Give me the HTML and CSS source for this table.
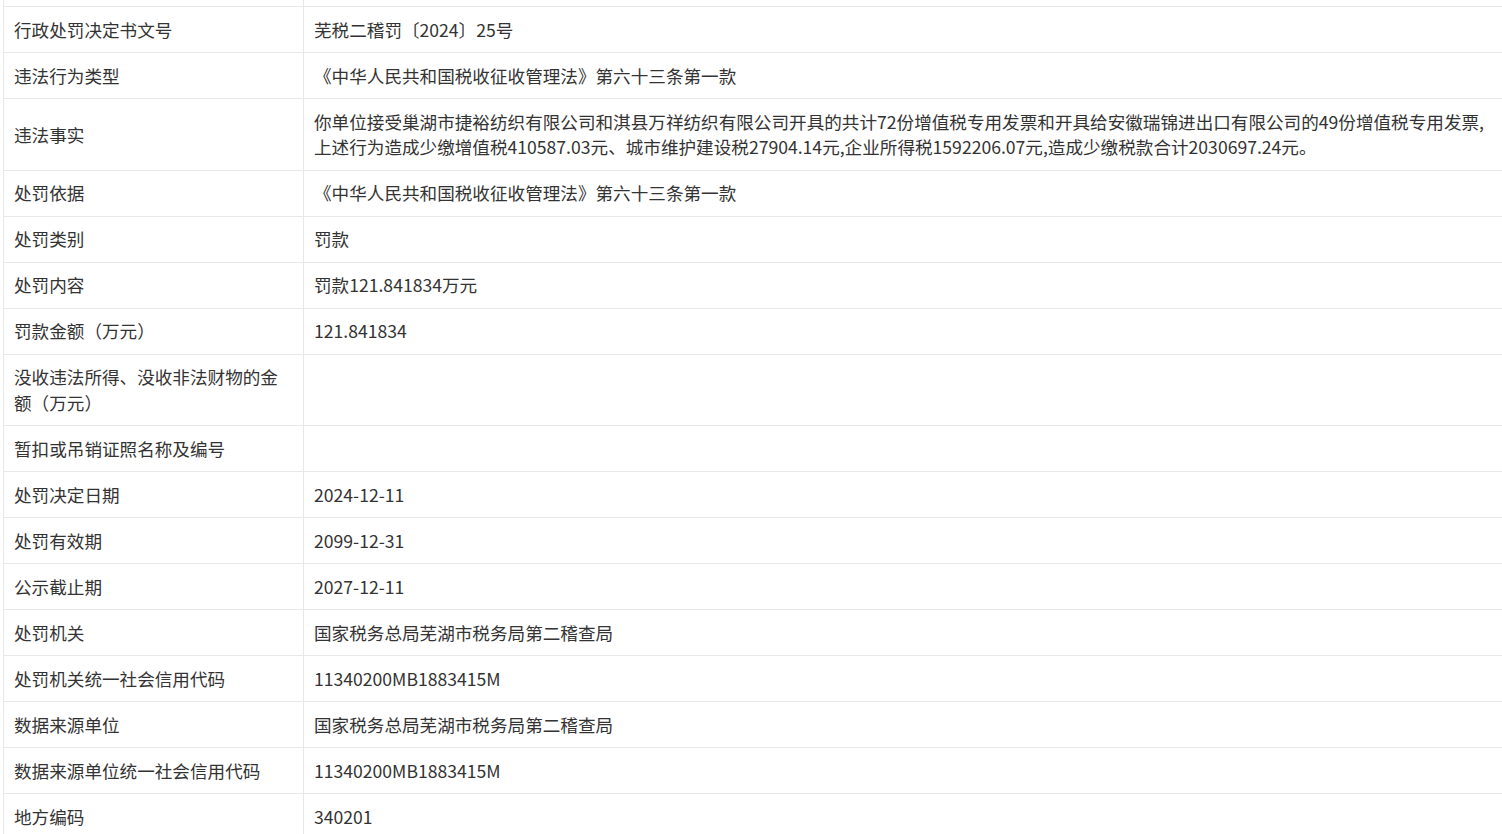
FILE: index.html
```html
<!DOCTYPE html>
<html lang="zh-CN">
<head>
<meta charset="utf-8">
<title>行政处罚信息</title>
<link rel="stylesheet" href="styles.css">
</head>
<body>
<div class="wrap">
<table class="info">
  <colgroup><col class="col-label"><col class="col-value"></colgroup>
  <tbody>
    <tr class="cut"><td>&nbsp;</td><td>&nbsp;</td></tr>
    <tr><td>行政处罚决定书文号</td><td>芜税二稽罚〔2024〕25号</td></tr>
    <tr><td>违法行为类型</td><td>《中华人民共和国税收征收管理法》第六十三条第一款</td></tr>
    <tr><td>违法事实</td><td>你单位接受巢湖市捷裕纺织有限公司和淇县万祥纺织有限公司开具的共计72份增值税专用发票和开具给安徽瑞锦进出口有限公司的49份增值税专用发票,<br>上述行为造成少缴增值税410587.03元、城市维护建设税27904.14元,企业所得税1592206.07元,造成少缴税款合计2030697.24元。</td></tr>
    <tr><td>处罚依据</td><td>《中华人民共和国税收征收管理法》第六十三条第一款</td></tr>
    <tr><td>处罚类别</td><td>罚款</td></tr>
    <tr><td>处罚内容</td><td>罚款121.841834万元</td></tr>
    <tr><td>罚款金额（万元）</td><td>121.841834</td></tr>
    <tr><td>没收违法所得、没收非法财物的金额（万元）</td><td></td></tr>
    <tr><td>暂扣或吊销证照名称及编号</td><td></td></tr>
    <tr><td>处罚决定日期</td><td>2024-12-11</td></tr>
    <tr><td>处罚有效期</td><td>2099-12-31</td></tr>
    <tr><td>公示截止期</td><td>2027-12-11</td></tr>
    <tr><td>处罚机关</td><td>国家税务总局芜湖市税务局第二稽查局</td></tr>
    <tr><td>处罚机关统一社会信用代码</td><td>11340200MB1883415M</td></tr>
    <tr><td>数据来源单位</td><td>国家税务总局芜湖市税务局第二稽查局</td></tr>
    <tr><td>数据来源单位统一社会信用代码</td><td>11340200MB1883415M</td></tr>
    <tr><td>地方编码</td><td>340201</td></tr>
  </tbody>
</table>
</div>
</body>
</html>
```
FILE: styles.css
```css
html, body {
  margin: 0;
  padding: 0;
  background: #ffffff;
  overflow: hidden;
}
.wrap {
  padding-left: 3px;
}
.info {
  margin-top: -40px;
  width: 1500px;
  table-layout: fixed;
  border-collapse: collapse;
  font-family: "Noto Sans CJK SC", "Noto Sans", sans-serif;
  font-size: 17.6px;
  color: #333333;
}
.col-label {
  width: 300px;
}
.info td {
  border: 1px solid #e8e8e8;
  padding: 9.75px 10px;
  line-height: 25.5px;
  vertical-align: middle;
  text-align: left;
  word-break: break-all;
}
```
